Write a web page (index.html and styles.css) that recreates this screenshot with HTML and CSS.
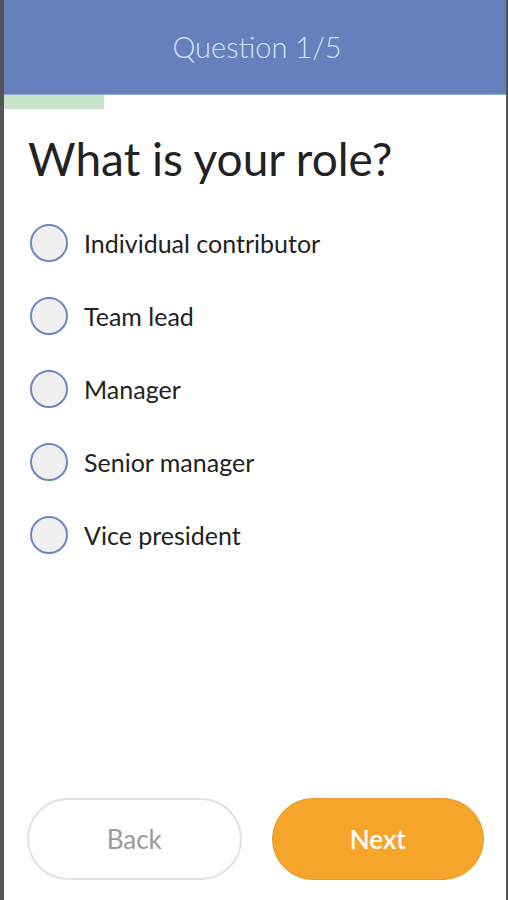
FILE: index.html
```html
<!DOCTYPE html>
<html lang="en">
<head>
<meta charset="utf-8">
<title>Question 1/5</title>
<link rel="stylesheet" href="styles.css">
</head>
<body>
<div class="frame">
  <header class="header">
    <h2 class="header-title">Question 1/5</h2>
  </header>
  <div class="progress"><div class="progress-fill"></div></div>
  <main class="content">
    <h1 class="question">What is your role?</h1>
    <ul class="options">
      <li class="option"><span class="radio"></span><span class="label">Individual contributor</span></li>
      <li class="option"><span class="radio"></span><span class="label">Team lead</span></li>
      <li class="option"><span class="radio"></span><span class="label">Manager</span></li>
      <li class="option"><span class="radio"></span><span class="label">Senior manager</span></li>
      <li class="option"><span class="radio"></span><span class="label">Vice president</span></li>
    </ul>
  </main>
  <footer class="actions">
    <button class="btn btn-back">Back</button>
    <button class="btn btn-next">Next</button>
  </footer>
</div>
</body>
</html>
```
FILE: styles.css
```css
html, body {
  margin: 0;
  padding: 0;
  height: 100%;
}
body {
  background: #555555;
  font-family: Lato, "Open Sans", "Liberation Sans", sans-serif;
}
.frame {
  box-sizing: border-box;
  height: 900px;
  margin-left: 4px;
  margin-right: 2px;
  background: #ffffff;
  display: flex;
  flex-direction: column;
}
.header {
  height: 94px;
  background: #6680bd;
  border-bottom: 1px solid #9aaad6;
  display: flex;
  align-items: center;
  justify-content: center;
}
.header-title {
  margin: 0;
  font-weight: 300;
  font-size: 29px;
  color: #d2e2f5;
  padding-left: 4px;
  padding-bottom: 2px;
}
.progress {
  height: 14px;
  background: #ffffff;
}
.progress-fill {
  width: 100px;
  height: 100%;
  background: #c6e5c8;
}
.content {
  flex: 1;
  padding: 0 24px 0 24px;
}
.question {
  margin: 22px 0 0;
  font-weight: 400;
  font-size: 46px;
  line-height: 56px;
  color: #222222;
}
.options {
  list-style: none;
  margin: 37px 0 0;
  padding: 0 0 0 2px;
  display: flex;
  flex-direction: column;
  gap: 35px;
}
.option {
  display: flex;
  align-items: center;
  gap: 16px;
  height: 38px;
}
.radio {
  box-sizing: border-box;
  width: 38px;
  height: 38px;
  border-radius: 50%;
  border: 2px solid #6d86c4;
  background: #f0f0f0;
  flex: none;
}
.label {
  font-size: 25px;
  color: #222222;
}
.actions {
  display: flex;
  gap: 30px;
  padding: 0 22px 20px 23px;
}
.btn {
  flex: 1;
  height: 82px;
  border-radius: 41px;
  font-family: Lato, "Open Sans", "Liberation Sans", sans-serif;
  font-size: 26px;
  cursor: pointer;
}
.btn-back {
  background: #ffffff;
  border: 2px solid #e2e2e2;
  color: #9a9a9a;
}
.btn-next {
  background: #f5a52a;
  border: 1px solid #dd9a30;
  color: #ffffff;
  font-weight: 600;
}
```
